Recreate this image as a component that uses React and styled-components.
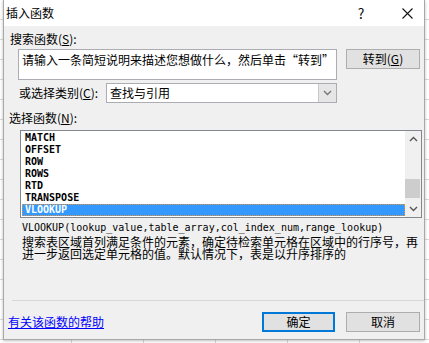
import React from "react";
import styled, { createGlobalStyle } from "styled-components";

const Global = createGlobalStyle`
  html, body { margin: 0; padding: 0; }
  body {
    width: 429px; height: 343px; overflow: hidden;
    background-color: #ffffff;
    background-image:
      repeating-linear-gradient(to bottom, transparent 0, transparent 19px, #d9d9d9 19px, #d9d9d9 20px),
      repeating-linear-gradient(to right, transparent 0, transparent 71px, #d9d9d9 71px, #d9d9d9 72px);
    font-family: "Noto Sans CJK SC", "Noto Sans", sans-serif;
    font-size: 12px;
    color: #000;
  }
`;

const Dialog = styled.div`
  margin-left: 3px;
  width: 422px;
  height: 340px;
  box-sizing: border-box;
  background: #f0f0f0;
  border: 1px solid #a8a8a8;
  border-top: none;
  box-shadow: 0 1px 3px rgba(0,0,0,0.25);
  display: flex;
  flex-direction: column;
  position: relative;
`;

const TitleBar = styled.div`
  height: 26px;
  background: #ffffff;
  display: flex;
  align-items: center;
  padding-left: 2px;
  font-size: 12px;
  line-height: 26px;
`;

const Title = styled.div`
  flex: 1;
`;

const TitleButton = styled.div`
  width: ${p => p.$w}px;
  display: flex;
  justify-content: center;
  align-items: center;
  height: 26px;
  font-size: 14px;
  color: #111;
`;

const Body = styled.div`
  display: flex;
  flex-direction: column;
  padding: 0 4px 0 5px;
`;

const Label = styled.div`
  line-height: 16px;
  height: 16px;
  margin-top: ${p => p.$mt}px;
  padding-left: ${p => p.$pl || 0}px;
  white-space: nowrap;
`;

const U = styled.span`
  text-decoration: underline;
`;

const Row = styled.div`
  display: flex;
  align-items: ${p => p.$align || "flex-start"};
  margin-top: ${p => p.$mt}px;
  padding-left: ${p => p.$pl || 0}px;
`;

const SearchBox = styled.div`
  width: 319px;
  height: 31px;
  box-sizing: border-box;
  background: #fff;
  border: 1px solid #abadb3;
  padding: 2px 0 0 3px;
  line-height: 16px;
  white-space: nowrap;
  overflow: hidden;
`;

const Button = styled.div`
  width: ${p => p.$w || 74}px;
  height: 20px;
  box-sizing: border-box;
  background: #e1e1e1;
  border: ${p => (p.$primary ? "2px solid #0078d7" : "1px solid #adadad")};
  display: flex;
  align-items: center;
  justify-content: center;
  margin-left: ${p => p.$ml || 0}px;
  line-height: 16px;
  white-space: nowrap;
`;

const CatLabel = styled.div`
  width: 87px;
  line-height: 16px;
  white-space: nowrap;
`;

const Select = styled.div`
  width: 231px;
  height: 20px;
  box-sizing: border-box;
  background: #fff;
  border: 1px solid #abadb3;
  display: flex;
  align-items: stretch;
`;

const SelectText = styled.div`
  flex: 1;
  padding-left: 3px;
  line-height: 18px;
`;

const SelectArrow = styled.div`
  width: 17px;
  background: #e6e6e6;
  border-left: 1px solid #c8c8c8;
  display: flex;
  align-items: center;
  justify-content: center;
`;

const ListBox = styled.div`
  margin-top: 4px;
  margin-left: 11px;
  width: 402px;
  height: 88px;
  box-sizing: border-box;
  background: #fff;
  border: 1px solid #828790;
  display: flex;
`;

const ListItems = styled.div`
  flex: 1;
  padding-top: 1px;
  padding-left: 1px;
  display: flex;
  flex-direction: column;
`;

const Item = styled.div`
  height: 12px;
  line-height: 12px;
  box-sizing: border-box;
  padding-left: 2px;
  font-family: "DejaVu Sans Mono", "Liberation Mono", monospace;
  font-weight: bold;
  font-size: 10px;
  background: ${p => (p.$sel ? "#3399ff" : "transparent")};
  color: ${p => (p.$sel ? "#fff" : "#000")};
  border: ${p => (p.$sel ? "1px dotted #e8903a" : "1px solid transparent")};
  display: flex;
  align-items: center;
`;

const ScrollBar = styled.div`
  width: 16px;
  background: #f0f0f0;
  display: flex;
  flex-direction: column;
  align-items: center;
`;

const ScrollArrow = styled.div`
  height: 16px;
  width: 16px;
  display: flex;
  align-items: center;
  justify-content: center;
`;

const ScrollTrack = styled.div`
  flex: 1;
  width: 16px;
  display: flex;
  flex-direction: column;
  justify-content: flex-end;
  padding-bottom: 3px;
`;

const Thumb = styled.div`
  width: 15px;
  height: 19px;
  background: #cdcdcd;
`;

const Syntax = styled.div`
  margin-top: 4px;
  padding-left: 13px;
  height: 12px;
  line-height: 12px;
  font-family: "DejaVu Sans Mono", "Liberation Mono", monospace;
  font-size: 10px;
  white-space: nowrap;
`;

const Desc = styled.div`
  margin-top: 2px;
  padding-left: 13px;
  width: 400px;
  line-height: 12px;
  font-size: 12px;
`;

const Separator = styled.div`
  margin-top: 40px;
  margin-left: 3px;
  width: 412px;
  height: 1px;
  background: #d8d8d8;
`;

const Footer = styled.div`
  margin-top: 11px;
  display: flex;
  align-items: center;
`;

const HelpLink = styled.a`
  color: #0000ff;
  text-decoration: underline;
  flex: 1;
  line-height: 16px;
  font-size: 12px;
  margin-left: -1px;
`;

const Chevron = ({ up, color = "#555" }) => (
  <svg width="9" height="6" viewBox="0 0 9 6">
    <polyline
      points={up ? "1,5 4.5,1.5 8,5" : "1,1 4.5,4.5 8,1"}
      fill="none"
      stroke={color}
      strokeWidth="1.4"
    />
  </svg>
);

const items = ["MATCH", "OFFSET", "ROW", "ROWS", "RTD", "TRANSPOSE", "VLOOKUP"];

export default function App() {
  return (
    <>
      <Global />
      <Dialog>
        <TitleBar>
          <Title>插入函数</Title>
          <TitleButton $w={24}>?</TitleButton>
          <TitleButton $w={24} style={{ marginLeft: 22, marginRight: 5 }}>
            <svg width="11" height="11" viewBox="0 0 11 11">
              <path d="M0.5 0.5 L10.5 10.5 M10.5 0.5 L0.5 10.5" stroke="#111" strokeWidth="1.1" />
            </svg>
          </TitleButton>
        </TitleBar>
        <Body>
          <Label $mt={5} $pl={1}>搜索函数(<U>S</U>):</Label>
          <Row $mt={2} $pl={9}>
            <SearchBox>请输入一条简短说明来描述您想做什么，然后单击“转到”</SearchBox>
            <Button $ml={9} $w={74}>转到(<U>G</U>)</Button>
          </Row>
          <Row $mt={3} $pl={10} $align="center">
            <CatLabel>或选择类别(<U>C</U>):</CatLabel>
            <Select>
              <SelectText>查找与引用</SelectText>
              <SelectArrow><Chevron color="#777" /></SelectArrow>
            </Select>
          </Row>
          <Label $mt={7}>选择函数(<U>N</U>):</Label>
          <ListBox>
            <ListItems>
              {items.map(it => (
                <Item key={it} $sel={it === "VLOOKUP"}>{it}</Item>
              ))}
            </ListItems>
            <ScrollBar>
              <ScrollArrow><Chevron up /></ScrollArrow>
              <ScrollTrack><Thumb /></ScrollTrack>
              <ScrollArrow><Chevron /></ScrollArrow>
            </ScrollBar>
          </ListBox>
          <Syntax>VLOOKUP(lookup_value,table_array,col_index_num,range_lookup)</Syntax>
          <Desc>搜索表区域首列满足条件的元素，确定待检索单元格在区域中的行序号，再进一步返回选定单元格的值。默认情况下，表是以升序排序的</Desc>
          <Separator />
          <Footer>
            <HelpLink href="#">有关该函数的帮助</HelpLink>
            <Button $primary $w={73}>确定</Button>
            <Button $ml={11} $w={74}>取消</Button>
          </Footer>
        </Body>
      </Dialog>
    </>
  );
}
